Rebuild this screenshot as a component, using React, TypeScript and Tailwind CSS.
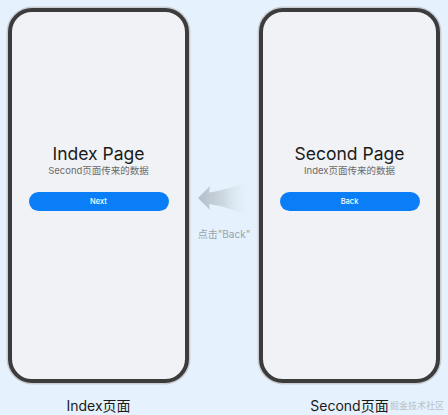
import React from "react";

const font = { fontFamily: 'Inter, "Noto Sans CJK SC", sans-serif' };

function Phone({ title, sub, btn }: { title: string; sub: string; btn: string }) {
  return (
    <div className="w-[181px] h-[375px] rounded-[24px] border-[4px] border-[#3c3c3c] bg-[#f1f2f5] shadow-[0_0_0_1.5px_#c9cdd2] flex flex-col items-center pt-[131px]">
      <div className="text-[17.5px] leading-[22px] text-[#1a1a1a]">{title}</div>
      <div className="text-[9.5px] leading-[12px] text-[#6b6b6b] mt-[0px]">{sub}</div>
      <div className="mt-[15px] w-[140px] h-[19px] rounded-full bg-[#0a7ef7] flex items-center justify-center text-white text-[7.5px] font-medium">
        {btn}
      </div>
    </div>
  );
}

export default function App() {
  return (
    <div className="w-[448px] h-[415px] bg-[#e5f1fc] relative overflow-hidden" style={font}>
      <div className="flex pt-[8px] pl-[8px]">
        <Phone title="Index Page" sub="Second页面传来的数据" btn="Next" />
        <div className="w-[70px] flex flex-col items-center pt-[171px]">
          <svg width="56" height="42" viewBox="0 0 56 42" className="ml-[2px]">
            <defs>
              <linearGradient id="ag" x1="0" y1="0" x2="1" y2="0">
                <stop offset="0" stopColor="#b3bfc9" />
                <stop offset="0.45" stopColor="#ccd6de" />
                <stop offset="1" stopColor="#e5f1fc" stopOpacity="0" />
              </linearGradient>
            </defs>
            <path
              d="M1 19 L13 7 L12 13.5 C25 12 38 7 55 2 L55 40 C41 32 27 27 12 25 L13 31 Z"
              fill="url(#ag)"
            />
          </svg>
          <div className="mt-[6px] text-[10px] text-[#9aa3ab] whitespace-nowrap">点击"Back"</div>
        </div>
        <Phone title="Second Page" sub="Index页面传来的数据" btn="Back" />
      </div>
      <div className="flex pl-[8px] mt-[12px]">
        <div className="w-[181px] text-center text-[14px] text-[#1a1a1a]">Index页面</div>
        <div className="w-[70px]" />
        <div className="w-[181px] text-center text-[14px] text-[#1a1a1a]">Second页面</div>
      </div>
      <div className="absolute left-[390px] top-[399px] text-[9px] text-[#b9c0c7]" style={{ fontFamily: '"Noto Sans CJK SC", serif' }}>
        掘金技术社区
      </div>
    </div>
  );
}
